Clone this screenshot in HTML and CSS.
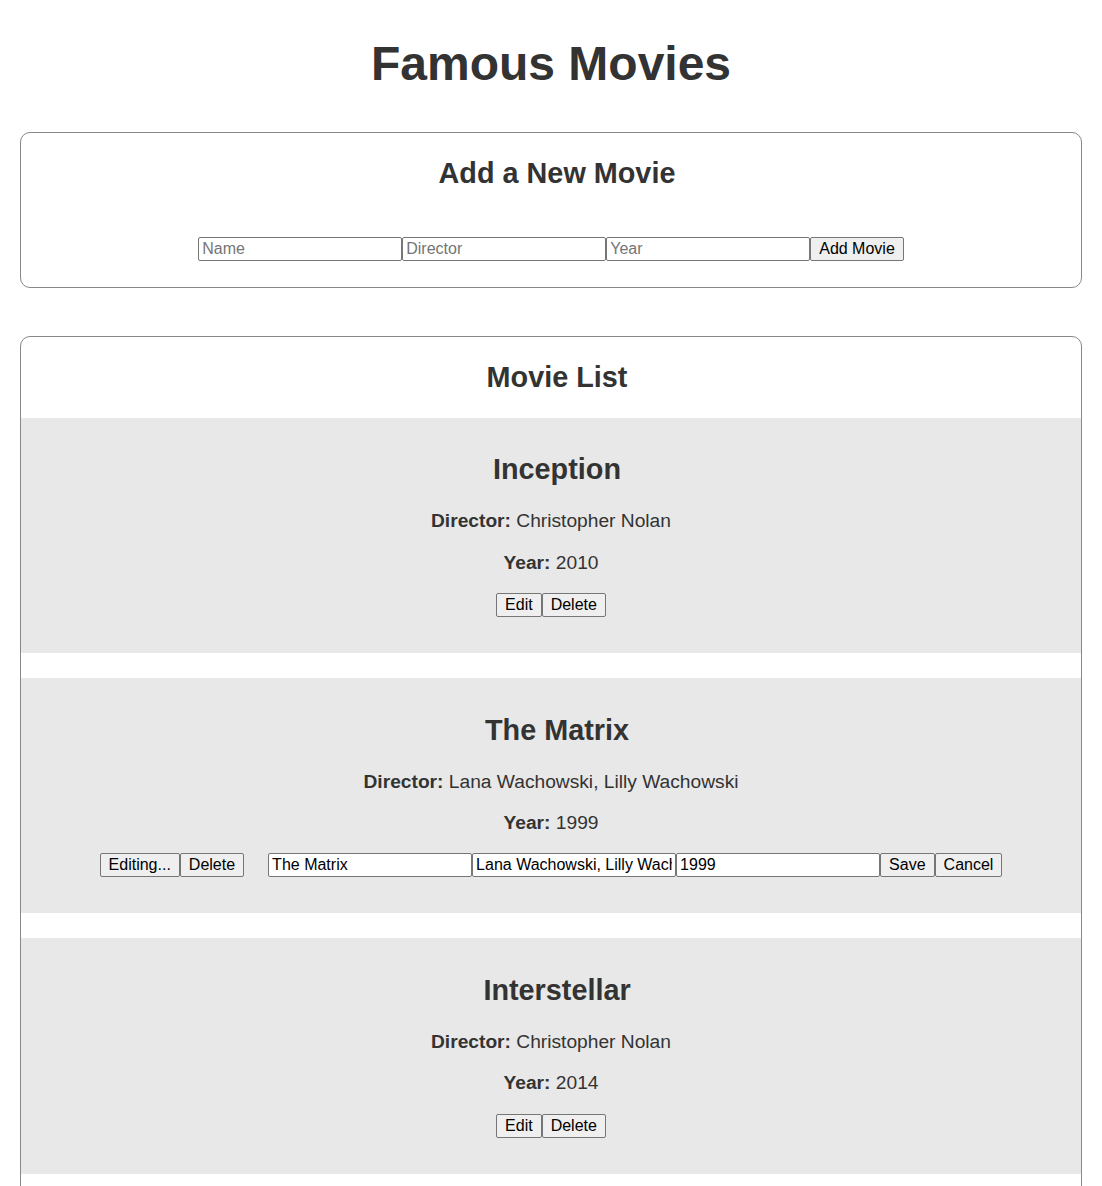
FILE: index.html
```html
<!DOCTYPE html>
<html lang="en">
<head>
<meta charset="utf-8">
<title>Famous Movies</title>
<link rel="stylesheet" href="styles.css">
</head>
<body>
<div class="page">
  <h1 class="title">Famous Movies</h1>

  <section class="panel">
    <h2 class="panel-title">Add a New Movie</h2>
    <form class="add-form">
      <input class="field" type="text" placeholder="Name">
      <input class="field" type="text" placeholder="Director">
      <input class="field" type="text" placeholder="Year">
      <button class="btn" type="button">Add Movie</button>
    </form>
  </section>

  <section class="panel list-panel">
    <h2 class="panel-title">Movie List</h2>

    <div class="movie">
      <h2 class="movie-title">Inception</h2>
      <p class="movie-line"><strong>Director:</strong> Christopher Nolan</p>
      <p class="movie-line"><strong>Year:</strong> 2010</p>
      <div class="actions">
        <div class="group">
          <button class="btn" type="button">Edit</button><button class="btn" type="button">Delete</button>
        </div>
      </div>
    </div>

    <div class="movie">
      <h2 class="movie-title">The Matrix</h2>
      <p class="movie-line"><strong>Director:</strong> Lana Wachowski, Lilly Wachowski</p>
      <p class="movie-line"><strong>Year:</strong> 1999</p>
      <div class="actions">
        <div class="group">
          <button class="btn" type="button">Editing...</button><button class="btn" type="button">Delete</button>
        </div>
        <div class="group edit-group">
          <input class="field field-value" type="text" value="The Matrix"><input class="field field-value" type="text" value="Lana Wachowski, Lilly Wachowski"><input class="field field-value" type="text" value="1999"><button class="btn" type="button">Save</button><button class="btn" type="button">Cancel</button>
        </div>
      </div>
    </div>

    <div class="movie">
      <h2 class="movie-title">Interstellar</h2>
      <p class="movie-line"><strong>Director:</strong> Christopher Nolan</p>
      <p class="movie-line"><strong>Year:</strong> 2014</p>
      <div class="actions">
        <div class="group">
          <button class="btn" type="button">Edit</button><button class="btn" type="button">Delete</button>
        </div>
      </div>
    </div>
  </section>
</div>
</body>
</html>
```

FILE: styles.css
```css
html, body {
  margin: 0;
  padding: 0;
  background: #ffffff;
}

body {
  font-family: "Liberation Sans", Arial, sans-serif;
  color: #333333;
}

.page {
  padding: 0 20px;
}

.title {
  margin: 36px 0 41px;
  font-size: 48px;
  font-weight: bold;
  text-align: center;
  color: #333333;
}

.panel {
  border: 1px solid #888888;
  border-radius: 10px;
  margin-bottom: 48px;
}

.panel-title {
  margin: 0.83em 0;
  padding-left: 12px;
  font-size: 28.8px;
  font-weight: bold;
  text-align: center;
}

.add-form {
  display: flex;
  justify-content: center;
  padding: 23px 0 26px;
  margin: 0;
}

.field {
  box-sizing: border-box;
  width: 204px;
  height: 24px;
  margin: 0;
  padding: 1px 3px;
  border: 1px solid #767676;
  border-radius: 2px;
  background: #ffffff;
  font-family: "Liberation Sans", Arial, sans-serif;
  font-size: 16px;
  color: #000000;
}

.field::placeholder {
  color: #757575;
}

.btn {
  box-sizing: border-box;
  height: 24px;
  margin: 0;
  padding: 0 8px;
  border: 1px solid #767676;
  border-radius: 2px;
  background: #efefef;
  font-family: "Liberation Sans", Arial, sans-serif;
  font-size: 16px;
  color: #000000;
}

.movie {
  background: #e8e8e8;
  margin-bottom: 25px;
  padding: 12px 0 36.3px;
  text-align: center;
}

.movie-title {
  margin: 23.9px 0;
  padding-left: 12px;
  font-size: 28.8px;
  font-weight: bold;
}

.movie-line {
  margin: 19.2px 0;
  font-size: 19.2px;
}

.actions {
  display: flex;
  justify-content: center;
  gap: 24px;
}

.group {
  display: flex;
}
```
